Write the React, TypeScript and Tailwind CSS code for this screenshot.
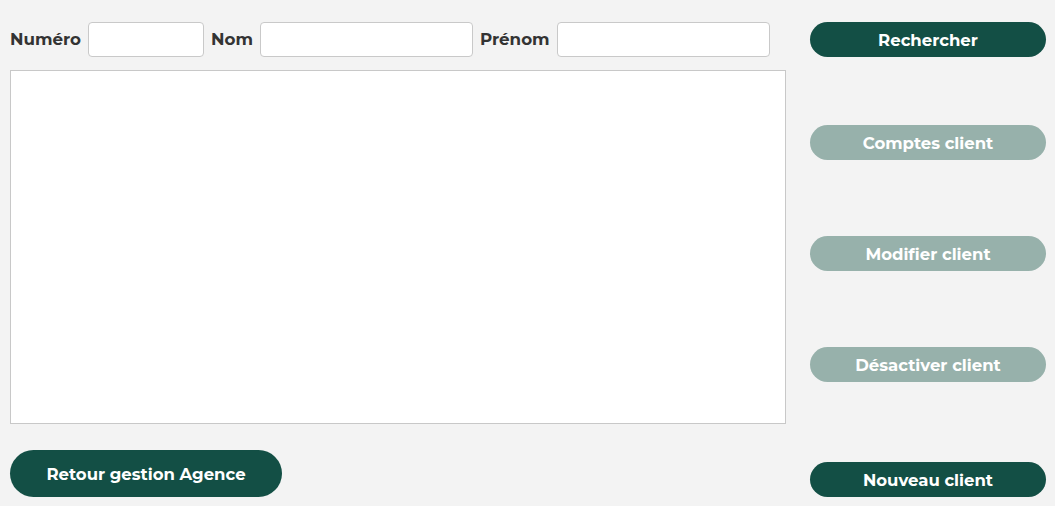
const FONT = "font-['Montserrat','DejaVu_Sans',sans-serif]";

function Field({ label, width }: { label: string; width: string }) {
  return (
    <label className="flex items-center gap-[7px]">
      <span className="pt-[1px] text-[16.7px] font-bold text-[#333]">{label}</span>
      <input className={`h-[35px] ${width} rounded-[4px] border border-[#c9c9c9] bg-white px-2 outline-none`} />
    </label>
  );
}

function Btn({ label, disabled }: { label: string; disabled?: boolean }) {
  return (
    <button
      disabled={disabled}
      className={`h-[35px] w-[236px] rounded-full pt-[1px] text-[16.5px] font-bold text-white ${
        disabled ? "bg-[#97b1ab]" : "bg-[#134f45]"
      }`}
    >
      {label}
    </button>
  );
}

export default function App() {
  return (
    <div className={`flex h-[506px] w-[1055px] gap-[24px] bg-[#f3f3f3] pl-[10px] pt-[22px] ${FONT}`}>
      <div className="flex w-[776px] flex-col">
        <div className="flex items-center gap-[7px]">
          <Field label="Numéro" width="w-[116px]" />
          <Field label="Nom" width="w-[213px]" />
          <Field label="Prénom" width="w-[213px]" />
        </div>
        <div className="mt-[13px] h-[354px] border border-[#c8c8c8] bg-white" />
        <button className="mt-[26px] h-[47px] w-[272px] rounded-full bg-[#134f45] pt-[1px] text-[16.5px] font-bold text-white">
          Retour gestion Agence
        </button>
      </div>
      <div className="flex flex-col">
        <Btn label="Rechercher" />
        <div className="mt-[68px]"><Btn label="Comptes client" disabled /></div>
        <div className="mt-[76px]"><Btn label="Modifier client" disabled /></div>
        <div className="mt-[76px]"><Btn label="Désactiver client" disabled /></div>
        <div className="mt-[80px]"><Btn label="Nouveau client" /></div>
      </div>
    </div>
  );
}
